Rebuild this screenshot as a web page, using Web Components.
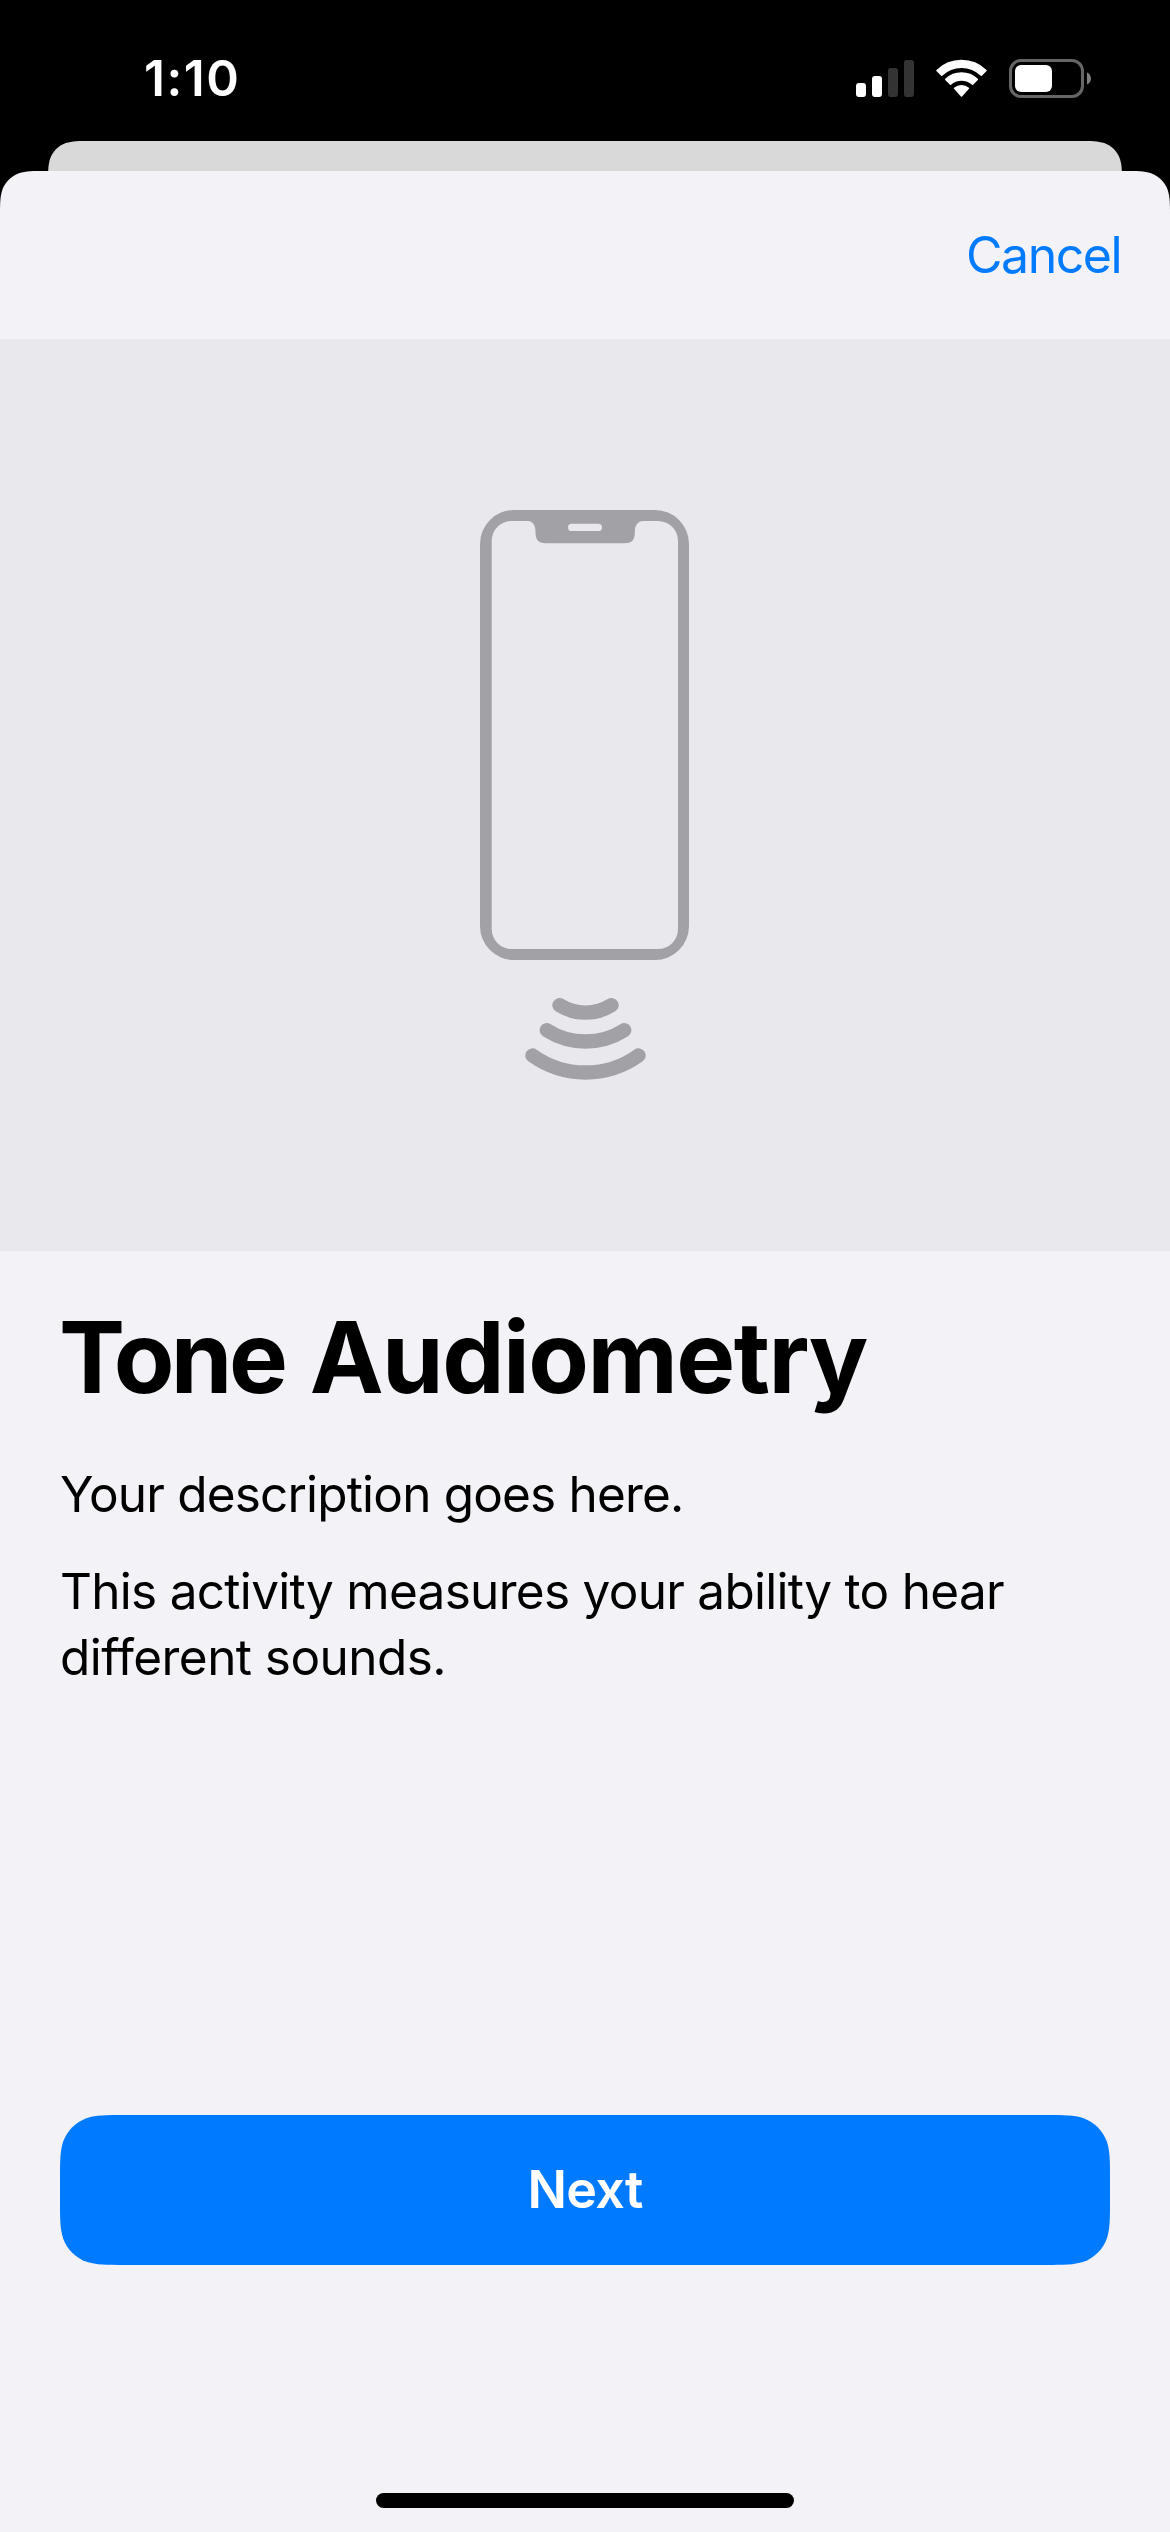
<!DOCTYPE html>
<html lang="en">
<head>
<meta charset="utf-8">
<title>Tone Audiometry</title>
<style>
  html, body { margin: 0; background: #000; }
  body { width: 1170px; height: 2532px; overflow: hidden; font-family: Inter, "Liberation Sans", sans-serif; }
</style>
</head>
<body>
<task-screen>
  <status-bar slot="status">1:10</status-bar>
  <nav-bar>Cancel</nav-bar>
  <hero-art></hero-art>
  <step-text>
    <span slot="title"><span style="letter-spacing:-3.6px">Tone</span> <span style="letter-spacing:-1.55px">Audiometry</span></span>
    <p style="letter-spacing:-.82px">Your description goes here.</p>
    <p style="letter-spacing:-.71px">This activity measures your ability to hear <span style="letter-spacing:-.56px">different sounds.</span></p>
  </step-text>
  <primary-button slot="footer">Next</primary-button>
  <home-indicator slot="footer"></home-indicator>
</task-screen>

<script>
// Rounded rectangle with continuous (smoothed) corners, as a path string.
function smoothRect(w, h, r, bottom = true) {
  const k = [[1.528665, 0], [1.088493, 0], [.868407, 0], [.631494, .074911],
             [.372824, .16906], [.16906, .372824], [.074911, .631494],
             [0, .868407], [0, 1.088493], [0, 1.528665]];
  const corner = (pts, map) => {
    const p = pts.map(([a, b]) => map(a * r, b * r).map(n => n.toFixed(2)).join(' '));
    return `L${p[0]}C${p[1]} ${p[2]} ${p[3]}C${p[4]} ${p[5]} ${p[6]}C${p[7]} ${p[8]} ${p[9]}`;
  };
  const back = [...k].reverse();
  let d = corner(k, (a, b) => [w - a, b]);
  d += bottom
    ? corner(back, (a, b) => [w - a, h - b]) + corner(k, (a, b) => [a, h - b])
    : `L${w} ${h}L0 ${h}`;
  d += corner(back, (a, b) => [a, b]);
  return 'M' + d.slice(1) + 'Z';
}

function define(name, html) {
  const template = document.createElement('template');
  template.innerHTML = html;
  customElements.define(name, class extends HTMLElement {
    constructor() {
      super();
      this.attachShadow({ mode: 'open' }).append(template.content.cloneNode(true));
    }
  });
}

define('task-screen', `
  <style>
    :host { display: flex; flex-direction: column; width: 1170px; height: 2532px; background: #000; }
    .behind { height: 30px; margin: 0 48px; background: #d9d9d9; clip-path: path('${smoothRect(1074, 60, 28, false)}'); }
    .sheet { flex: 1; display: flex; flex-direction: column; background: #f2f2f7; clip-path: path('${smoothRect(1170, 2361, 30, false)}'); }
    footer { margin-top: auto; display: flex; flex-direction: column; align-items: center; gap: 228px; padding-bottom: 24px; }
  </style>
  <slot name="status"></slot>
  <div class="behind"></div>
  <div class="sheet">
    <slot></slot>
    <footer><slot name="footer"></slot></footer>
  </div>`);

define('status-bar', `
  <style>
    :host { display: flex; justify-content: space-between; align-items: center; box-sizing: border-box;
      height: 141px; padding: 15px 78px 0 144px; color: #fff; font-size: 49.5px; font-weight: 600; letter-spacing: 1.5px; }
    svg { display: block; }
  </style>
  <time><slot></slot></time>
  <svg width="237" height="41" viewBox="855 57 237 41">
    <g fill="#fff">
      <rect x="856" y="82" width="10" height="14" rx="3"/>
      <rect x="872" y="75" width="10" height="21" rx="3"/>
    </g>
    <g fill="#333">
      <rect x="888" y="67" width="10" height="29" rx="3"/>
      <rect x="904" y="59" width="10" height="37" rx="3"/>
    </g>
    <g fill="#fff" stroke="#fff" stroke-width="1.6" stroke-linejoin="round">
      <path d="M937 69.5A35.4 35.4 0 0 1 986 69.5L981.3 74.1A28.6 28.6 0 0 0 941.7 74.1Z"/>
      <path d="M945.8 78.4A22.9 22.9 0 0 1 977.2 78.4L972.5 83.1A16.5 16.5 0 0 0 950.5 83.1Z"/>
      <path d="M954.6 87.3A10.6 10.6 0 0 1 968.4 87.3L961.5 95Z"/>
    </g>
    <rect x="1010.5" y="59.5" width="72" height="36" rx="10.5" fill="none" stroke="#666" stroke-width="3"/>
    <rect x="1015" y="64" width="37" height="27" rx="6" fill="#fff"/>
    <path d="M1087 71.4C1092.3 73.6 1092.3 81.4 1087 83.6Z" fill="#808080"/>
  </svg>`);

define('nav-bar', `
  <style>
    :host { display: flex; justify-content: flex-end; align-items: center; height: 168px; padding-right: 49px;
      color: #007aff; font-size: 50px; letter-spacing: -1.5px; }
  </style>
  <slot></slot>`);

define('hero-art', `
  <style>
    :host { display: flex; justify-content: center; height: 912px; background: #e8e8ed; }
    svg { display: block; margin-top: 171px; }
  </style>
  <svg width="210" height="571" viewBox="480 510 210 571">
    <path fill="#a2a1a6" fill-rule="evenodd" d="M514 510H655A34 34 0 0 1 689 544V926A34 34 0 0 1 655 960H514A34 34 0 0 1 480 926V544A34 34 0 0 1 514 510Z
      M511.7 521A20 20 0 0 0 491.7 541V929A20 20 0 0 0 511.7 949H658A20 20 0 0 0 678 929V541A20 20 0 0 0 658 521H643C638 521.3 634.8 525 634.8 531.5C634.8 539 633 543.3 624.5 543.3H546C537.5 543.3 535.5 539 535.5 531.5C535.5 525 532.5 521.3 528 521Z
      M571.7 523.7H598.3A3.7 3.7 0 0 1 598.3 531.1H571.7A3.7 3.7 0 0 1 571.7 523.7Z"/>
    <g fill="none" stroke="#a2a1a6" stroke-width="14.4" stroke-linecap="round">
      <path d="M559.5 1005.2A49 49 0 0 0 611.5 1005.2"/>
      <path d="M546.8 1030.2A72 72 0 0 0 624.2 1030.2"/>
      <path d="M532.5 1055.5A91 91 0 0 0 638.5 1055.5"/>
    </g>
  </svg>`);

define('step-text', `
  <style>
    :host { display: flex; flex-direction: column; gap: 31px; padding: 46px 60px 0; color: #000; }
    h1 { margin: 0 0 13px -1px; font-size: 99px; line-height: 120px; font-weight: 700; letter-spacing: -2px; word-spacing: 4px; white-space: nowrap; }
    ::slotted(p) { margin: 0; font-size: 49.5px; line-height: 66px; }
  </style>
  <h1><slot name="title"></slot></h1>
  <slot></slot>`);

define('primary-button', `
  <style>
    :host { display: block; }
    button { display: block; width: 1050px; height: 150px; border: 0; padding: 0; background: #007aff; color: #fff;
      font: 600 52px/150px Inter, "Liberation Sans", sans-serif; letter-spacing: -.7px;
      clip-path: path('${smoothRect(1050, 150, 42)}'); }
  </style>
  <button type="button"><slot></slot></button>`);

define('home-indicator', `
  <style>:host { display: block; width: 418px; height: 15px; border-radius: 8px; background: #000; }</style>`);
</script>
</body>
</html>
